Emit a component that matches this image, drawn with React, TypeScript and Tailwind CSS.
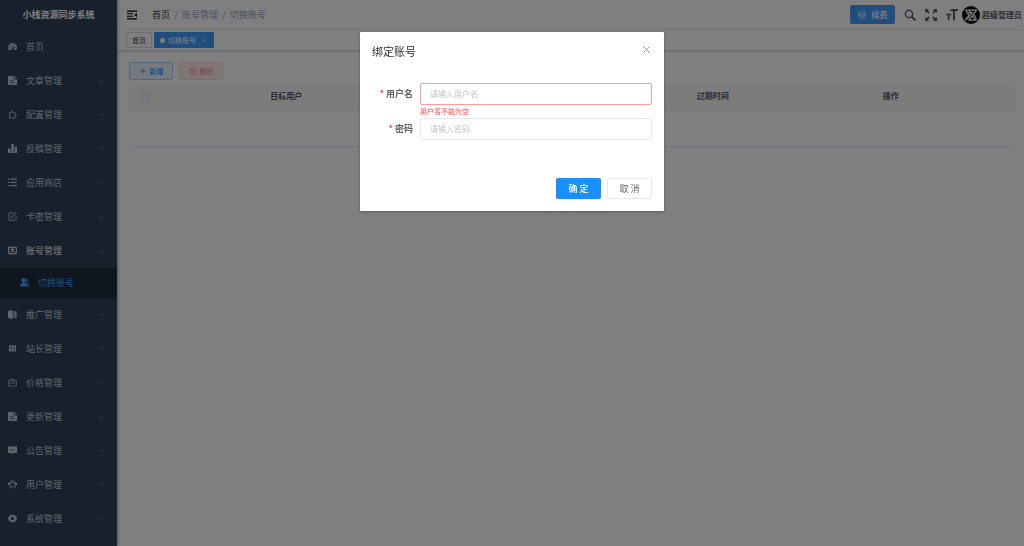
import type { ReactNode } from "react";
import { ChevronDown, ChevronUp, Plus, Trash2, X } from "lucide-react";

interface MenuItem {
  title: string;
  icon: ReactNode;
  leaf?: boolean;
  children?: { title: string; icon: ReactNode }[];
}

const Icon = ({ children, className = "mb-0.5 size-[9px]" }: { children: ReactNode; className?: string }) => (
  <svg viewBox="0 0 18 18" className={`shrink-0 ${className}`} fill="currentColor" aria-hidden="true">
    {children}
  </svg>
);

const line = { fill: "none", stroke: "currentColor", strokeWidth: 1.6 };

const DashboardIcon = (
  <Icon>
    <path
      fillRule="evenodd"
      d="M9 2a9 9 0 0 0-9 9c0 1.700.4 3.200 1.200 4.500h15.600A9 9 0 0 0 9 2ZM9 4a1.200 1.200 0 1 1 0 2.400A1.200 1.200 0 0 1 9 4ZM4.500 6a1.200 1.200 0 1 1 0 2.400 1.200 1.200 0 0 1 0-2.400ZM2.800 10a1.200 1.200 0 1 1 0 2.400 1.200 1.200 0 0 1 0-2.400ZM15.200 10a1.200 1.200 0 1 1 0 2.400 1.200 1.200 0 0 1 0-2.400ZM11.500 6l1.200.5-1.700 4.500a2.200 2.200 0 1 1-1.300-.4L11.500 6Z"
    />
  </Icon>
);

const DocIcon = (
  <Icon>
    <path
      fillRule="evenodd"
      d="M0 1.500C0 .7.700 0 1.500 0H11v7h7v9.500c0 .8-.7 1.500-1.500 1.500h-15C.7 18 0 17.300 0 16.500v-15ZM12.500 0 18 5.500h-5.500V0ZM4 9v1.500h8V9H4Zm0 4v1.500h10V13H4Z"
    />
  </Icon>
);

const PuzzleIcon = (
  <Icon>
    <path {...line} d="M3 5h4c-1-4 4-4 3 0h4v4c4-1 4 4 0 3v4H3v-4c2-.5 2-3 0-3.500V5Z" />
  </Icon>
);

const ChartIcon = (
  <Icon>
    <path d="M0 9h5v9H0zM6.500 0h5v18h-5zM13 5.500h5V18h-5z" />
  </Icon>
);

const ListIcon = (
  <Icon>
    <path d="M0 1h3v2.500H0zM5 1h13v2.500H5zM0 7.500h3V10H0zM5 7.500h13V10H5zM0 14h3v2.500H0zM5 14h13v2.500H5z" />
  </Icon>
);

const EditIcon = (
  <Icon>
    <path {...line} d="M11 1.500H2v15h14V8M6 12l1-3 8-8 2 2-8 8-3 1Z" />
  </Icon>
);

const AccountIcon = (
  <Icon>
    <path {...line} strokeWidth={2} d="M1.500 2.500h15v13h-15zM5 13c1-4 7-4 8 0" />
    <circle cx="9" cy="7" r="2.500" />
  </Icon>
);

const PeoplesIcon = (
  <Icon>
    <path d="M7 0c3 0 4.500 2 4.500 4.500S10.500 8 10 9.500c0 2 4.500 2 4.500 7.500H0c0-5.500 4.500-5.500 4.500-7.500C4 8 2.500 7 2.500 4.500S4 0 7 0Z" />
    <path d="M12 1c3 0 4 2.500 3.500 5-.3 1-1 2-1.200 3 .2 2 3.700 2 3.700 8h-2.500c0-5-2-6-4-7 1.500-2.500 2-6 .5-9Z" />
  </Icon>
);

const BookIcon = (
  <Icon>
    <path d="M0 2 9.500 0v18L0 16z" />
    <path d="M11 2h6.500v14H11z" opacity=".75" />
  </Icon>
);

const ServerIcon = (
  <Icon>
    <path
      fillRule="evenodd"
      d="M2 3h14v12H2V3Zm2 3v1.500h4V6H4Zm6 0v1.500h4V6h-4ZM2 8.800v.8h14v-.8H2ZM5 11.500V13h3v-1.500H5Zm5 0V13h4v-1.500h-4Z"
    />
  </Icon>
);

const BriefcaseIcon = (
  <Icon>
    <path {...line} strokeWidth={1.3} d="M1 5h16v11H1zM6 5V2h6v3M1 10h5m6 0h5M6.500 10h5M9 8v4" />
  </Icon>
);

const MessageIcon = (
  <Icon>
    <path fillRule="evenodd" d="M0 1h18v13h-7l-2 3-2-3H0V1Zm4 6v1.800h2V7H4Zm4 0v1.800h2V7H8Zm4 0v1.800h2V7h-2Z" />
  </Icon>
);

const UserIcon = (
  <Icon>
    <path {...line} strokeWidth={2} d="M3 5.500C4 .5 14 .5 15 5.500M1 6v4m16-4v4M3 6h12v4c-1 5-11 5-12 0V6ZM5 13l-3 4m11-4 3 4" />
  </Icon>
);

const GearIcon = (
  <Icon>
    <path
      fillRule="evenodd"
      d="m6 1 3 1 3-1 2 3 3 1v3l1 1-1 1v3l-3 1-2 3-3-1-3 1-2-3-3-1v-3L0 9l1-1V5l3-1 2-3Zm3 4.500a3.500 3.500 0 1 0 0 7 3.500 3.500 0 0 0 0-7Z"
    />
  </Icon>
);

const menu: MenuItem[] = [
  { title: "首页", icon: DashboardIcon, leaf: true },
  { title: "文章管理", icon: DocIcon },
  { title: "配置管理", icon: PuzzleIcon },
  { title: "投稿管理", icon: ChartIcon },
  { title: "应用商店", icon: ListIcon },
  { title: "卡密管理", icon: EditIcon },
  { title: "账号管理", icon: AccountIcon, children: [{ title: "切换账号", icon: PeoplesIcon }] },
  { title: "推广管理", icon: BookIcon },
  { title: "站长管理", icon: ServerIcon },
  { title: "价格管理", icon: BriefcaseIcon },
  { title: "更新管理", icon: DocIcon },
  { title: "公告管理", icon: MessageIcon },
  { title: "用户管理", icon: UserIcon },
  { title: "系统管理", icon: GearIcon },
];

const Sidebar = () => (
  <aside className="z-10 w-[117px] shrink-0 bg-[#304156] text-[#bfcbd9] shadow-[1px_0_3px_rgba(0,21,41,0.35)]">
    <h1 className="flex h-[30px] items-center justify-center text-[9px] font-bold text-white">小栈资源同步系统</h1>
    <nav>
      {menu.map((item) => (
        <div key={item.title}>
          <a
            href="#"
            className={`flex h-[34px] items-center gap-[9px] pr-[11px] pl-2 text-[9px] ${item.children ? "text-[#f4f4f5]" : ""}`}
          >
            {item.icon}
            <span className="flex-1">{item.title}</span>
            {!item.leaf &&
              (item.children ? (
                <ChevronUp className="size-[10px] text-[#909399]" strokeWidth={1.5} />
              ) : (
                <ChevronDown className="size-[10px] text-[#909399]" strokeWidth={1.5} />
              ))}
          </a>
          {item.children?.map((child) => (
            <a
              key={child.title}
              href="#"
              className="flex h-[30px] items-center gap-[9px] bg-[#1f2d3d] pl-5 text-[9px] text-[#409eff]"
            >
              {child.icon}
              <span>{child.title}</span>
            </a>
          ))}
        </div>
      ))}
    </nav>
  </aside>
);

const Navbar = () => (
  <header className="flex h-[30px] items-center border-b border-[#f0f1f2] pr-0.5 pl-[10px]">
    <button type="button" aria-label="折叠菜单" className="mr-[15px]">
      <Icon className="size-[10px]">
        <path d="M0 1h18v2H0zM0 5.700h11v2H0zM0 10.300h11v2H0zM0 15h18v2H0zM18 5.500v7L13 9z" />
      </Icon>
    </button>
    <nav className="flex items-center text-[9px] text-[#97a8be]">
      <a href="#" className="text-[#303133]">首页</a>
      <span className="w-3 text-center">/</span>
      <span>账号管理</span>
      <span className="w-3 text-center">/</span>
      <span>切换账号</span>
    </nav>
    <div className="ml-auto flex items-center text-[#5a5e66]">
      <button
        type="button"
        className="mr-[9px] flex h-[19px] w-[45px] items-center justify-center gap-[6px] rounded-xs bg-[#409eff] text-[8px] font-medium text-white"
      >
        <Icon className="size-2">
          <path {...line} d="M2 4.500c0-4 14-4 14 0s-14 4-14 0v8c0 5 14 5 14 0v-8M2 9c2 3.500 12 3.500 14 0" />
        </Icon>
        续费
      </button>
      <button type="button" aria-label="搜索" className="mr-[9px]">
        <Icon className="size-3">
          <circle {...line} strokeWidth={2.2} cx="7.500" cy="7.500" r="5.500" />
          <path {...line} strokeWidth={3} d="m11.500 11.500 5.500 5.500" />
        </Icon>
      </button>
      <button type="button" aria-label="全屏" className="mr-[9px]">
        <Icon className="size-3">
          <path d="M0 0h6L4 2l3 3-2 2-3-3-2 2zM18 0v6l-2-2-3 3-2-2 3-3-2-2zM0 18v-6l2 2 3-3 2 2-3 3 2 2zM18 18h-6l2-2-3-3 2-2 3 3 2-2z" />
        </Icon>
      </button>
      <button type="button" aria-label="字体大小" className="mr-1">
        <Icon className="size-3">
          <path d="M6.500 0H18v3h-4.500v14h-3V3h-4zM0 7h8v2.500H5.300V17H2.700V9.500H0z" />
        </Icon>
      </button>
      <svg viewBox="0 0 36 36" className="mr-0.5 size-[18px]" aria-hidden="true">
        <circle cx="18" cy="18" r="18" fill="#08080a" />
        <path
          d="M7 8h22L14 28h16M14 8l3 5M7 8l7 11L6 29M12 13h8l-9 12M20 19l8 9M23 16l5 7"
          fill="none"
          stroke="#fff"
          strokeWidth="2.500"
        />
      </svg>
      <span className="text-[8px] font-bold">超级管理员</span>
    </div>
  </header>
);

const TagsView = () => (
  <div className="flex h-[21px] items-center gap-0.5 border-b border-[#d8dce5] pl-[9px] text-[7px] shadow-[0_1px_2px_rgba(0,0,0,0.12)]">
    <a href="#" className="flex h-4 items-center border border-[#d8dce5] px-[5px] text-[#495060]">
      首页
    </a>
    <div className="flex h-4 w-[60px] items-center bg-[#409eff] pl-[6px] text-white">
      <span className="mr-[3px] size-[5px] rounded-full bg-white" />
      <a href="#">切换账号</a>
      <button type="button" aria-label="关闭标签" className="ml-[5px]">
        <X className="size-[5px]" strokeWidth={3} />
      </button>
    </div>
  </div>
);

const AccountTable = () => (
  <main className="pt-[11px] pr-[9px] pl-3">
    <div className="mb-[3px] flex gap-[6px] text-[7px]">
      <button
        type="button"
        className="flex h-[18px] w-[44px] items-center justify-center gap-[3px] rounded-xs border border-[#a3d3ff] bg-[#e8f4ff] font-medium text-[#1890ff]"
      >
        <Plus className="size-2" strokeWidth={2} />
        新增
      </button>
      <button
        type="button"
        disabled
        className="flex h-[18px] w-[44px] items-center justify-center gap-[3px] rounded-xs border border-[#ffdbdb] bg-[#ffeded] font-medium text-[#ff9292]"
      >
        <Trash2 className="size-2" strokeWidth={2} />
        删除
      </button>
    </div>
    <table className="w-full table-fixed text-[8px] text-[#515a6e]">
      <colgroup>
        <col className="w-[33px]" />
        <col />
        <col />
        <col className="w-[108px]" />
        <col />
      </colgroup>
      <thead>
        <tr className="h-[27px] border-b border-[#e6ebf5] bg-[#f8f8f9]">
          <th>
            <input
              type="checkbox"
              disabled
              aria-label="全选"
              className="mx-auto block size-[9px] appearance-none rounded-[1px] border border-[#dcdfe6] bg-[#edf2fc]"
            />
          </th>
          <th>目标用户</th>
          <th />
          <th>过期时间</th>
          <th>操作</th>
        </tr>
      </thead>
      <tbody>
        <tr className="h-9 border-b border-[#e6ebf5]">
          <td colSpan={5} />
        </tr>
      </tbody>
    </table>
  </main>
);

const BindDialog = () => (
  <div className="fixed inset-0 z-20 flex items-start justify-center bg-black/50 pt-8">
    <form
      role="dialog"
      aria-labelledby="bind-title"
      className="w-[304px] rounded-[1px] bg-white p-3 text-[#606266] shadow-[0_1px_3px_rgba(0,0,0,0.3)]"
    >
      <div className="flex h-[14px] items-center justify-between">
        <h2 id="bind-title" className="text-[11px] text-[#303133]">绑定账号</h2>
        <button type="button" aria-label="关闭" className="self-start">
          <X className="size-[11px] text-[#909399]" strokeWidth={2} />
        </button>
      </div>

      <div className="mt-[25px] flex">
        <label
          htmlFor="username"
          className="flex h-[22px] w-12 items-center justify-end gap-0.5 pr-[7px] text-[9px] font-bold whitespace-nowrap"
        >
          <span className="text-[#ff4949]">*</span>
          用户名
        </label>
        <div className="flex-1">
          <input
            id="username"
            type="text"
            placeholder="请输入用户名"
            className="block h-[22px] w-full rounded-xs border border-[#ff9c9c] px-[9px] pb-0.5 text-[8px] outline-none placeholder:text-[#c0c4cc]"
          />
          <p className="h-[13px] text-[7px] leading-[12px] text-[#ff4949]">用户名不能为空</p>
        </div>
      </div>

      <div className="flex">
        <label
          htmlFor="password"
          className="flex h-[22px] w-12 items-center justify-end gap-0.5 pr-[7px] text-[9px] font-bold whitespace-nowrap"
        >
          <span className="text-[#ff4949]">*</span>
          密码
        </label>
        <input
          id="password"
          type="password"
          placeholder="请输入密码"
          className="block h-[22px] flex-1 rounded-xs border border-[#e6e9ef] px-[9px] pb-0.5 text-[8px] outline-none placeholder:text-[#c0c4cc]"
        />
      </div>

      <div className="mt-[38px] flex justify-end gap-[6px] text-[9px]">
        <button type="button" className="h-[21px] w-[45px] rounded-xs bg-[#1890ff] font-medium text-white">
          确 定
        </button>
        <button type="button" className="h-[21px] w-[45px] rounded-xs border border-[#e6e9ef]">
          取 消
        </button>
      </div>
    </form>
  </div>
);

const App = () => {
  return (
    <div lang="zh-CN" className="flex min-h-screen bg-white font-['Noto_Sans_CJK_SC',sans-serif]">
      <Sidebar />
      <div className="min-w-0 flex-1">
        <Navbar />
        <TagsView />
        <AccountTable />
      </div>
      <BindDialog />
    </div>
  );
};

export default App;
